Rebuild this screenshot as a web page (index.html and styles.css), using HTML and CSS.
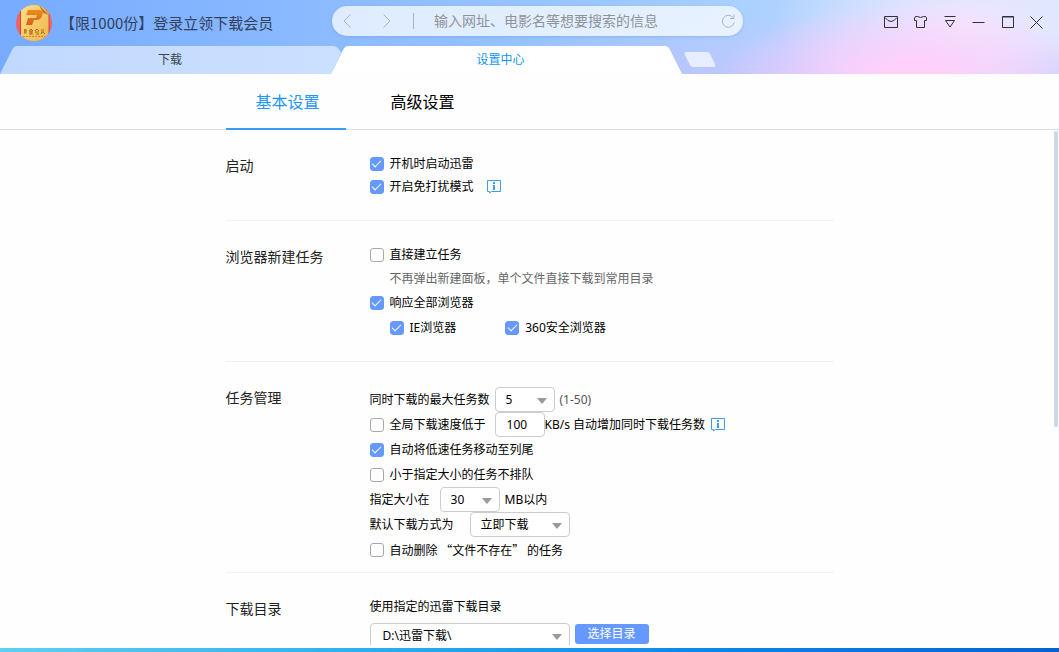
FILE: index.html
```html
<!DOCTYPE html>
<html lang="zh-CN">
<head>
<meta charset="utf-8">
<title>设置中心</title>
<link rel="stylesheet" href="styles.css">
</head>
<body>
<div class="window">
  <header class="header">
    <div class="toolbar">
      <div class="promo">
        <svg class="logo" width="36" height="36" viewBox="0 0 36 36" aria-hidden="true">
          <defs>
            <clipPath id="disc"><circle cx="18" cy="18" r="18"/></clipPath>
            <linearGradient id="gold" x1="0" y1="0" x2="1" y2="1">
              <stop offset="0" stop-color="#fbe08a"/><stop offset="1" stop-color="#eeb548"/>
            </linearGradient>
            <linearGradient id="flame" x1="0" y1="0" x2="0" y2="1">
              <stop offset="0" stop-color="#f08a1c"/><stop offset="1" stop-color="#d9601a"/>
            </linearGradient>
          </defs>
          <g clip-path="url(#disc)">
            <rect width="36" height="36" fill="#f2616a"/>
            <path d="M5 0H25L33 9V36H5Z" fill="url(#gold)"/>
            <path d="M23 0L33 10L27 8Z" fill="#b8792a"/>
            <path d="M4.500 6V30M33 9V29" stroke="#d8473a" stroke-width="1"/>
            <path d="M12 5H24Q28 6 26 11Q25 15 20 15H18L16 20H10L12 13H20L21 10H10Z" fill="url(#flame)"/>
            <path d="M8 25H11M8 27H11M9 24V29M13 26L15 24L17 26M13 27H17M15 25V29M13 29H17M19 26L21 24L23 26M19 27H23M20 29H23M25 25H28M25 27H28M26 27L25 29M27 27L29 29" stroke="#b5631c" fill="none"/>
            <path d="M7 31.500H29" stroke="#c98a34" stroke-dasharray="2 1"/>
          </g>
        </svg>
        <span class="promo-text">【限1000份】登录立领下载会员</span>
      </div>
      <form class="search">
        <button type="button" class="icon-btn" aria-label="后退"><svg width="10" height="14" viewBox="0 0 10 14"><path d="M8.500 .5L2 7L8.500 13.500"/></svg></button>
        <button type="button" class="icon-btn forward" aria-label="前进"><svg width="10" height="14" viewBox="0 0 10 14"><path d="M1.500 .5L8 7L1.500 13.500"/></svg></button>
        <span class="divider"></span>
        <input class="search-input" type="text" aria-label="搜索" placeholder="输入网址、电影名等想要搜索的信息">
        <button type="button" class="icon-btn" aria-label="刷新"><svg width="15" height="15" viewBox="0 0 15 15"><path d="M13.200 8.500A6 6 0 1 1 12 3.500M13 .5V4.500H9"/></svg></button>
      </form>
      <div class="controls">
        <button class="control" aria-label="消息"><svg width="14" height="13" viewBox="0 0 14 13"><path d="M.5 .5H13.500V11.500H.5ZM1 1.500Q4 5.500 7 5.500Q10 5.500 13 1.500"/></svg></button>
        <button class="control" aria-label="皮肤"><svg width="14" height="13" viewBox="0 0 14 13"><path d="M3.500 .5Q6.500 2.500 9.500 .5H11.500L12.500 2L12.500 4.500H10.500V11.500H2.500V4.500H.5V2L1.500 .5Z"/></svg></button>
        <button class="control" aria-label="菜单"><svg width="12" height="13" viewBox="0 0 12 13"><path d="M.5 .5H11.500M1.500 4.500H10.500L6 11Z"/></svg></button>
        <button class="control" aria-label="最小化"><svg width="13" height="13" viewBox="0 0 13 13"><path d="M.5 6.500H12.500"/></svg></button>
        <button class="control" aria-label="最大化"><svg width="13" height="13" viewBox="0 0 13 13"><path d="M1.500 .5H12.500V11.500H1.500ZM1.500 1H12.500"/></svg></button>
        <button class="control" aria-label="关闭"><svg width="13" height="13" viewBox="0 0 13 13"><path d="M.5 .5L12.500 12.500M12.500 .5L.5 12.500"/></svg></button>
      </div>
    </div>
    <nav class="tabs">
      <svg class="edge" width="17" height="28" viewBox="0 0 17 28"><path class="idle" d="M0 28L12 4Q14 0 17 0V28Z"/></svg>
      <button class="tab">下载</button>
      <svg class="edge" width="17" height="28" viewBox="0 0 17 28"><path class="idle" d="M0 0H2Q7 0 10 7L0 28Z"/><path class="live" d="M0 28L12 4Q14 0 17 0V28Z"/></svg>
      <button class="tab tab-active">设置中心</button>
      <svg class="edge" width="17" height="28" viewBox="0 0 17 28"><path class="live" d="M0 0Q3 0 5 4L17 28H0Z"/></svg>
      <button class="new-tab" aria-label="新建标签"><svg width="32" height="15" viewBox="0 0 32 15"><path d="M2 0H23Q25 0 26 2L31 12Q32 15 29 15H9Q7 15 6 13L1 3Q0 0 2 0Z"/></svg></button>
    </nav>
  </header>

  <nav class="subnav">
    <div class="subnav-inner">
      <button class="subtab subtab-active">基本设置</button>
      <button class="subtab">高级设置</button>
    </div>
  </nav>

  <main class="content">
    <div class="scroll-thumb"></div>
    <section class="section">
      <h2 class="section-title">启动</h2>
      <div class="rows rows-tight">
        <div class="row"><label class="check"><input type="checkbox" checked>开机时启动迅雷</label></div>
        <div class="row"><label class="check"><input type="checkbox" checked>开启免打扰模式</label>
          <svg class="info info-far" width="14" height="14" viewBox="0 0 14 14"><path d="M.5 .5H13.500V11.500H4.500L2.500 13V11.500H.5Z"/><path class="info-mark" d="M6 2H8V4H6ZM6 5H8V10H6Z"/></svg></div>
      </div>
    </section>

    <section class="section">
      <h2 class="section-title">浏览器新建任务</h2>
      <div class="rows">
        <div class="row"><label class="check"><input type="checkbox">直接建立任务</label></div>
        <p class="hint">不再弹出新建面板，单个文件直接下载到常用目录</p>
        <div class="row"><label class="check"><input type="checkbox" checked>响应全部浏览器</label></div>
        <div class="row browsers">
          <label class="check"><input type="checkbox" checked>IE浏览器</label>
          <label class="check"><input type="checkbox" checked>360安全浏览器</label>
        </div>
      </div>
    </section>

    <section class="section">
      <h2 class="section-title">任务管理</h2>
      <div class="rows rows-tasks">
        <div class="row gap-s"><label for="max">同时下载的最大任务数</label>
          <span class="select"><select id="max"><option>5</option></select></span>
          <span class="range">(1-50)</span></div>
        <div class="row"><label class="check"><input type="checkbox">全局下载速度低于</label>
          <input class="field" type="text" value="100" aria-label="速度"><span>KB/s 自动增加同时下载任务数</span>
          <svg class="info" width="14" height="14" viewBox="0 0 14 14"><path d="M.5 .5H13.500V11.500H4.500L2.500 13V11.500H.5Z"/><path class="info-mark" d="M6 2H8V4H6ZM6 5H8V10H6Z"/></svg></div>
        <div class="row"><label class="check"><input type="checkbox" checked>自动将低速任务移动至列尾</label></div>
        <div class="row"><label class="check"><input type="checkbox">小于指定大小的任务不排队</label></div>
        <div class="row gap-s"><label class="size-label" for="size">指定大小在</label>
          <span class="select"><select id="size"><option>30</option></select></span>
          <span>MB以内</span></div>
        <div class="row gap-l"><label for="mode">默认下载方式为</label>
          <span class="select select-mid"><select id="mode"><option>立即下载</option></select></span></div>
        <div class="row"><label class="check"><input type="checkbox"><span class="quoted">自动删除 “文件不存在” 的任务</span></label></div>
      </div>
    </section>

    <section class="section section-last">
      <h2 class="section-title">下载目录</h2>
      <div class="rows">
        <div class="row"><label for="dir">使用指定的迅雷下载目录</label></div>
        <div class="row gap-s dir-row">
          <span class="select select-wide"><select id="dir"><option>D:\迅雷下载\</option></select></span>
          <button class="primary">选择目录</button>
        </div>
      </div>
    </section>
  </main>
</div>
<div class="desktop"></div>
</body>
</html>
```
FILE: styles.css
```css
* { box-sizing: border-box; }

body {
  margin: 0;
  height: 100vh;
  display: flex;
  flex-direction: column;
  overflow: hidden;
  background: #fefefe;
  color: #000;
  font: 12px/20px "Noto Sans", "Noto Sans CJK SC", sans-serif;
}

button, input, select { font: inherit; color: inherit; }
button { border: 0; padding: 0; background: none; }
svg { display: block; flex: none; }

.window {
  flex: 1;
  min-height: 0;
  display: flex;
  flex-direction: column;
  padding-bottom: 3px;
}

.desktop {
  flex: none;
  height: 4px;
  background: linear-gradient(90deg, #5fd0ee, #2fb0ee 33%, #0c87ea 66%, #0463d2);
}

/* Title bar */
.header {
  flex: none;
  background:
    radial-gradient(ellipse 190px 70px at 86% 100%, #ffd0fa 15%, rgba(255, 208, 250, 0) 100%),
    radial-gradient(ellipse 190px 90px at 91% 35%, rgba(244, 230, 255, 1), rgba(244, 230, 255, 0)),
    radial-gradient(ellipse 330px 70px at 76% 110%, rgba(200, 196, 255, .9), rgba(200, 196, 255, 0)),
    radial-gradient(ellipse 90px 50px at 101% 115%, #b4c8ff, rgba(180, 200, 255, 0)),
    linear-gradient(90deg, #76abff, #8bbaff 30%, #9bc8ff 58%, #b0d4ff 75%, #cdeafe 100%);
}

.toolbar {
  height: 46px;
  display: grid;
  grid-template-columns: 332px minmax(200px, 411px) 1fr;
}

.promo {
  display: flex;
  align-items: center;
  gap: 8px;
  padding-left: 16px;
}

.promo-text {
  font: 15px/20px "Noto Sans CJK SC", sans-serif;
  color: #33415f;
  white-space: nowrap;
}

.search {
  display: flex;
  align-items: center;
  height: 30px;
  margin: 6px 0 0;
  padding: 0 7px 0 10px;
  border-radius: 15px;
  background: rgba(255, 255, 255, .72);
  box-shadow: 0 1px 3px rgba(90, 130, 200, .3);
}

.icon-btn svg { fill: none; stroke: #a9b4c4; }
.forward { margin-left: 30px; }
.divider { width: 1px; height: 16px; margin: 0 18px 0 21px; background: #a9b4c4; }

.search-input {
  flex: 1;
  min-width: 0;
  border: 0;
  padding: 0 2px;
  background: none;
  font-size: 14px;
}
.search-input::placeholder { color: #909399; opacity: 1; }

.controls {
  display: flex;
  justify-content: flex-end;
  align-items: center;
  gap: 16px;
  height: 44px;
  padding-right: 16px;
}
.control svg { fill: none; stroke: #2f3040; }

.tabs { display: flex; height: 28px; }
.tab {
  flex: 0 1 314px;
  padding-right: 8px;
  background: rgba(255, 255, 255, .55);
  color: #3d4450;
  line-height: 28px;
}
.tab-active { flex-basis: 317px; padding-right: 12px; background: #fff; color: #1296f5; }
.edge .idle { fill: rgba(255, 255, 255, .55); }
.edge .live { fill: #fff; }
.new-tab { height: 27px; margin-left: 2px; }
.new-tab svg { fill: rgba(240, 244, 255, .85); }

/* Settings categories */
.subnav { flex: none; height: 56px; border-bottom: 1px solid #dfe2e4; }
.subnav-inner {
  display: flex;
  gap: 15px;
  max-width: 608px;
  margin: 0 auto;
}
.subtab {
  width: 120px;
  height: 56px;
  padding: 2px 0 0 4px;
  border-bottom: 2px solid transparent;
  font-size: 16px;
}
.subtab-active { border-color: #3f9cf5; color: #2196f8; }

/* Settings */
.content {
  flex: 1;
  min-height: 0;
  position: relative;
  overflow: hidden;
}
.scroll-thumb {
  position: absolute;
  top: 1px;
  right: 1px;
  width: 4px;
  height: 296px;
  border-radius: 2px;
  background: #c9d9e8;
}

.section {
  display: grid;
  grid-template-columns: 144px 1fr;
  max-width: 608px;
  margin: 0 auto;
  border-bottom: 1px solid #f0f2f2;
}
.section-last { border: 0; }

.section-title {
  margin: 0;
  padding-top: 26px;
  font-size: 14px;
  font-weight: 400;
  line-height: 20px;
  color: #222;
}

.rows { padding: 21px 0; }
.rows-tight { padding: 22px 0; }
.rows-tasks { padding: 25px 0 10px; }
.row { display: flex; align-items: center; height: 25px; white-space: nowrap; }
.rows-tight .row { height: 23px; }
.gap-s { gap: 5px; }
.gap-l { gap: 16px; }
.size-label { margin-right: 5px; }
.browsers { padding-left: 20px; gap: 49px; }
.dir-row { margin-top: 4px; }

.hint { margin: 0; padding-left: 20px; line-height: 23px; color: #666; }
.range { color: #555; }
.quoted { font-family: "Noto Sans CJK SC", sans-serif; }

.check { display: flex; align-items: center; gap: 6px; }
.check input {
  appearance: none;
  display: grid;
  place-items: center;
  flex: none;
  width: 14px;
  height: 14px;
  margin: 0;
  border: 1px solid #a8a8a8;
  border-radius: 3px;
  background: #fff;
}
.check input:checked { border-color: #6699ff; background: #6699ff; }
.check input:checked::after {
  content: "";
  width: 8px;
  height: 4px;
  margin-bottom: 3px;
  border: solid #fff;
  border-width: 0 0 1px 1px;
  transform: rotate(-45deg);
}

.info { margin-left: 6px; fill: none; stroke: #3d9bee; }
.info-far { margin-left: 13px; }
.info-mark { fill: #3d9bee; stroke: none; }

.select { position: relative; width: 60px; height: 25px; }
.select-mid { width: 100px; }
.select-wide { width: 200px; }
.select select, .field {
  width: 100%;
  height: 25px;
  margin: 0;
  padding: 0 10px;
  border: 1px solid #ccc;
  border-radius: 4px;
  background: #fff;
}
.select select { appearance: none; }
.select-wide select { padding-left: 12px; }
.select::after {
  content: "";
  position: absolute;
  right: 8px;
  top: 11px;
  border: solid transparent;
  border-width: 6px 5px 0;
  border-top-color: #999;
}
.field { width: 50px; margin-left: 9px; padding: 0 11px; }

.primary {
  width: 74px;
  height: 20px;
  margin-bottom: 4px;
  border-radius: 3px;
  background: #6699ff;
  color: #fff;
}
```
